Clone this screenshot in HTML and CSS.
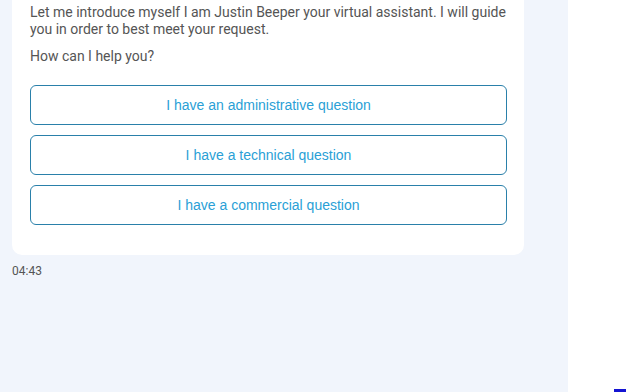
FILE: index.html
```html
<!DOCTYPE html>
<html>
<head>
<meta charset="utf-8">
<link rel="stylesheet" href="styles.css">
</head>
<body>
<div class="layout">
  <main class="chat">
    <div class="card">
      <p class="intro">Let me introduce myself I am Justin Beeper your virtual assistant. I will guide you in order to best meet your request.</p>
      <p class="ask">How can I help you?</p>
      <div class="options">
        <button class="option">I have an administrative question</button>
        <button class="option">I have a technical question</button>
        <button class="option">I have a commercial question</button>
      </div>
    </div>
    <div class="time">04:43</div>
  </main>
  <aside class="side"><span class="launcher"></span></aside>
</div>
</body>
</html>
```
FILE: styles.css
```css
html, body { margin: 0; padding: 0; height: 100%; overflow: hidden; }
body { font-family: Roboto, "Liberation Sans", sans-serif; background: #fff; }
.layout { display: flex; height: 392px; }
.chat { width: 568px; background: #f1f5fc; padding: 0 44px 0 12px; box-sizing: border-box; }
.card { background: #fff; border-radius: 0 0 10px 10px; padding: 4px 17px 30px 18px; }
.intro { margin: 0; font-size: 14px; line-height: 17px; color: #555; }
.ask { margin: 10px 0 0; font-size: 14px; line-height: 17px; color: #555; }
.options { display: flex; flex-direction: column; gap: 10px; margin-top: 20px; }
.option { height: 40px; border: 1px solid #2a80aa; border-radius: 6px; background: #fff; color: #2a9fd6; font-family: "Liberation Sans", Arial, sans-serif; font-size: 14px; padding: 0; }
.time { margin-top: 9px; font-size: 12px; line-height: 14px; color: #555; }
.side { flex: 1; position: relative; }
.launcher { position: absolute; right: 0; bottom: 0; width: 12px; height: 3px; background: #1414d2; }
```
